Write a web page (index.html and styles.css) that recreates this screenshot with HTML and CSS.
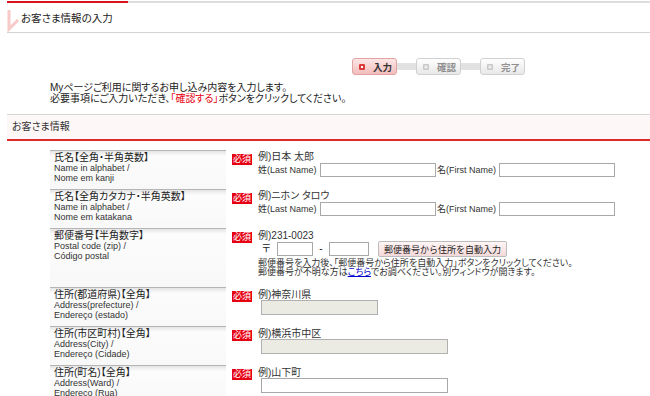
FILE: index.html
```html
<!DOCTYPE html>
<html>
	<head>
		<meta charset="utf-8" />
		<title>お客さま情報の入力</title>
		<link rel="stylesheet" href="styles.css">
	</head>
	<body>
		<div id="page">
			<div class="head">
				<div class="head-bar"></div>
				<h1><svg viewBox="0 0 14 29"><polyline points="2,7 2,26 11,17" fill="none" stroke="#f7c9c9" stroke-width="3"/></svg>お客さま情報の入力</h1>
			</div>
			<div class="steps">
				<span class="step on"><i></i>入力</span>
				<span class="joint"></span>
				<span class="step"><i></i>確認</span>
				<span class="joint"></span>
				<span class="step"><i></i>完了</span>
			</div>
			<p class="lead">Myページご利用に関するお申し込み内容を入力します。<br>必要事項にご入力いただき、<em>「確認する」</em>ボタンをクリックしてください。</p>
			<h2>お客さま情報</h2>
			<div class="form">
				<div class="row">
					<div class="label">氏名【全角・半角英数】<small>Name in alphabet /<br>Nome em kanji</small></div>
					<div class="req">必須</div>
					<div class="field">
						<div class="ex">例)日本 太郎</div>
						<div class="names"><span class="cap">姓(Last Name)</span><input type="text"><span class="cap">名(First Name)</span><input type="text"></div>
					</div>
				</div>
				<div class="row">
					<div class="label">氏名【全角カタカナ・半角英数】<small>Name in alphabet /<br>Nome em katakana</small></div>
					<div class="req">必須</div>
					<div class="field">
						<div class="ex">例)ニホン タロウ</div>
						<div class="names"><span class="cap">姓(Last Name)</span><input type="text"><span class="cap">名(First Name)</span><input type="text"></div>
					</div>
				</div>
				<div class="row">
					<div class="label">郵便番号【半角数字】<small>Postal code (zip) /<br>Código postal</small></div>
					<div class="req">必須</div>
					<div class="field zip">
						<div class="ex">例)231-0023</div>
						<div class="zipline"><span class="mark">〒</span><input type="text" class="zip1"><span class="dash">-</span><input type="text" class="zip2"><button>郵便番号から住所を自動入力</button></div>
						<p class="note">郵便番号を入力後、「郵便番号から住所を自動入力」ボタンをクリックしてください。<br>郵便番号が不明な方は<a href="javascript:;">こちら</a>でお調べください。別ウィンドウが開きます。</p>
					</div>
				</div>
				<div class="row">
					<div class="label">住所(都道府県)【全角】<small>Address(prefecture) /<br>Endereço (estado)</small></div>
					<div class="req">必須</div>
					<div class="field addr">
						<div class="ex">例)神奈川県</div>
						<input type="text" class="pref" disabled>
					</div>
				</div>
				<div class="row">
					<div class="label">住所(市区町村)【全角】<small>Address(City) /<br>Endereço (Cidade)</small></div>
					<div class="req">必須</div>
					<div class="field addr">
						<div class="ex">例)横浜市中区</div>
						<input type="text" class="long" disabled>
					</div>
				</div>
				<div class="row">
					<div class="label">住所(町名)【全角】<small>Address(Ward) /<br>Endereço (Rua)</small></div>
					<div class="req">必須</div>
					<div class="field addr">
						<div class="ex">例)山下町</div>
						<input type="text" class="long">
					</div>
				</div>
			</div>
		</div>
	</body>
</html>
```

FILE: styles.css
```css
*{
	margin:0;
	padding:0;
}
body{
	font-family:"Liberation Sans","Noto Sans CJK JP",sans-serif;
	font-size:10px;
	color:#222;
	background:#fff;
	overflow:hidden;
	font-feature-settings:"palt";
}
#page{
	padding-left:7px;
}
.head-bar{
	height:2px;
	margin-top:1px;
	background:linear-gradient(to right,#d7141a 121px,#dddddd 121px);
}
.head h1{
	display:flex;
	align-items:center;
	height:29px;
	border-bottom:1px solid #d3d3d3;
	font-size:10.5px;
	font-weight:normal;
	color:#222;
}
.head svg{
	width:14px;
	height:29px;
}
.steps{
	display:flex;
	align-items:center;
	margin:25px 0 0 345px;
}
.step{
	display:flex;
	align-items:center;
	box-sizing:border-box;
	width:45px;
	height:17px;
	padding-left:6px;
	border:1px solid #d0d0d0;
	border-radius:3px;
	background:linear-gradient(#fefefe,#e8e8e8);
	color:#909090;
	font-size:9.5px;
	font-weight:bold;
}
.step i{
	width:6px;
	height:6px;
	margin-right:8px;
	border-radius:1px;
	background:#d4d4d4;
	box-shadow:inset 0 0 0 1.5px #c8c8c8, inset 0 0 0 3px #eee;
}
.step.on{
	border-color:#e3a3a3;
	background:linear-gradient(#fce6e6,#f3bcbc);
	color:#333;
}
.step.on i{
	background:#fff;
	box-shadow:inset 0 0 0 2px #db3b3b;
}
.joint{
	width:19px;
	height:7px;
	background:#e2e2e2;
}
.lead{
	margin:7px 0 0 43px;
	line-height:11px;
}
.lead em{
	font-style:normal;
	color:#e60012;
}
h2{
	margin-top:10px;
	height:24px;
	padding-left:5px;
	border-top:1px solid #d6d6d6;
	border-bottom:2px solid #e02a2a;
	background:#fdf7f7;
	line-height:24px;
	font-size:10px;
	font-weight:normal;
	color:#333;
}
.form{
	margin:9px 0 0 43px;
}
.row{
	display:flex;
}
.label{
	box-sizing:border-box;
	width:176px;
	padding:2px 4px 6px;
	border-top:1px solid #b5b5b5;
	background:linear-gradient(#e4e4e4,#fcfcfc 5px,#f8f8f8);
	line-height:10px;
	color:#222;
}
.label small{
	display:block;
	font-size:9px;
	color:#333;
}
.req{
	width:20px;
	height:11px;
	margin:4px 6px 0;
	background:#e60012;
	color:#fff;
	font-size:9px;
	line-height:11px;
	text-align:center;
}
.field{
	padding-top:2px;
	line-height:10px;
}
.ex{
	color:#333;
}
.names{
	display:flex;
	align-items:center;
	margin-top:1px;
}
.cap{
	width:62px;
	font-size:9px;
	color:#333;
	white-space:nowrap;
}
input{
	box-sizing:border-box;
	height:14px;
	border:1px solid #a8a8a8;
	background:#fff;
}
.names input{
	width:116px;
	margin-right:1px;
}
.zip{
	padding:3px 0 10px;
}
.zipline{
	display:flex;
	align-items:center;
	height:16px;
}
.mark{
	width:15px;
	margin-left:4px;
}
.zip1{
	width:36px;
}
.dash{
	width:16px;
	text-align:center;
}
.zip2{
	width:40px;
	margin-right:9px;
}
button{
	height:16px;
	padding:0 5px;
	border:1px solid #bcbcbc;
	border-radius:2px;
	background:linear-gradient(#fff5f5,#f4d9d9);
	font-family:inherit;
	font-size:9px;
	color:#222;
}
.note{
	margin-top:2px;
	font-size:9px;
	line-height:9px;
	color:#333;
}
.note a{
	color:#0000cc;
}
.addr{
	padding-top:3px;
}
.addr input{
	display:block;
	height:15px;
	margin-left:3px;
}
.pref{
	width:117px;
}
.long{
	width:187px;
}
input:disabled{
	background:#ebebe4;
	border-color:#b0b0b0;
}
```
